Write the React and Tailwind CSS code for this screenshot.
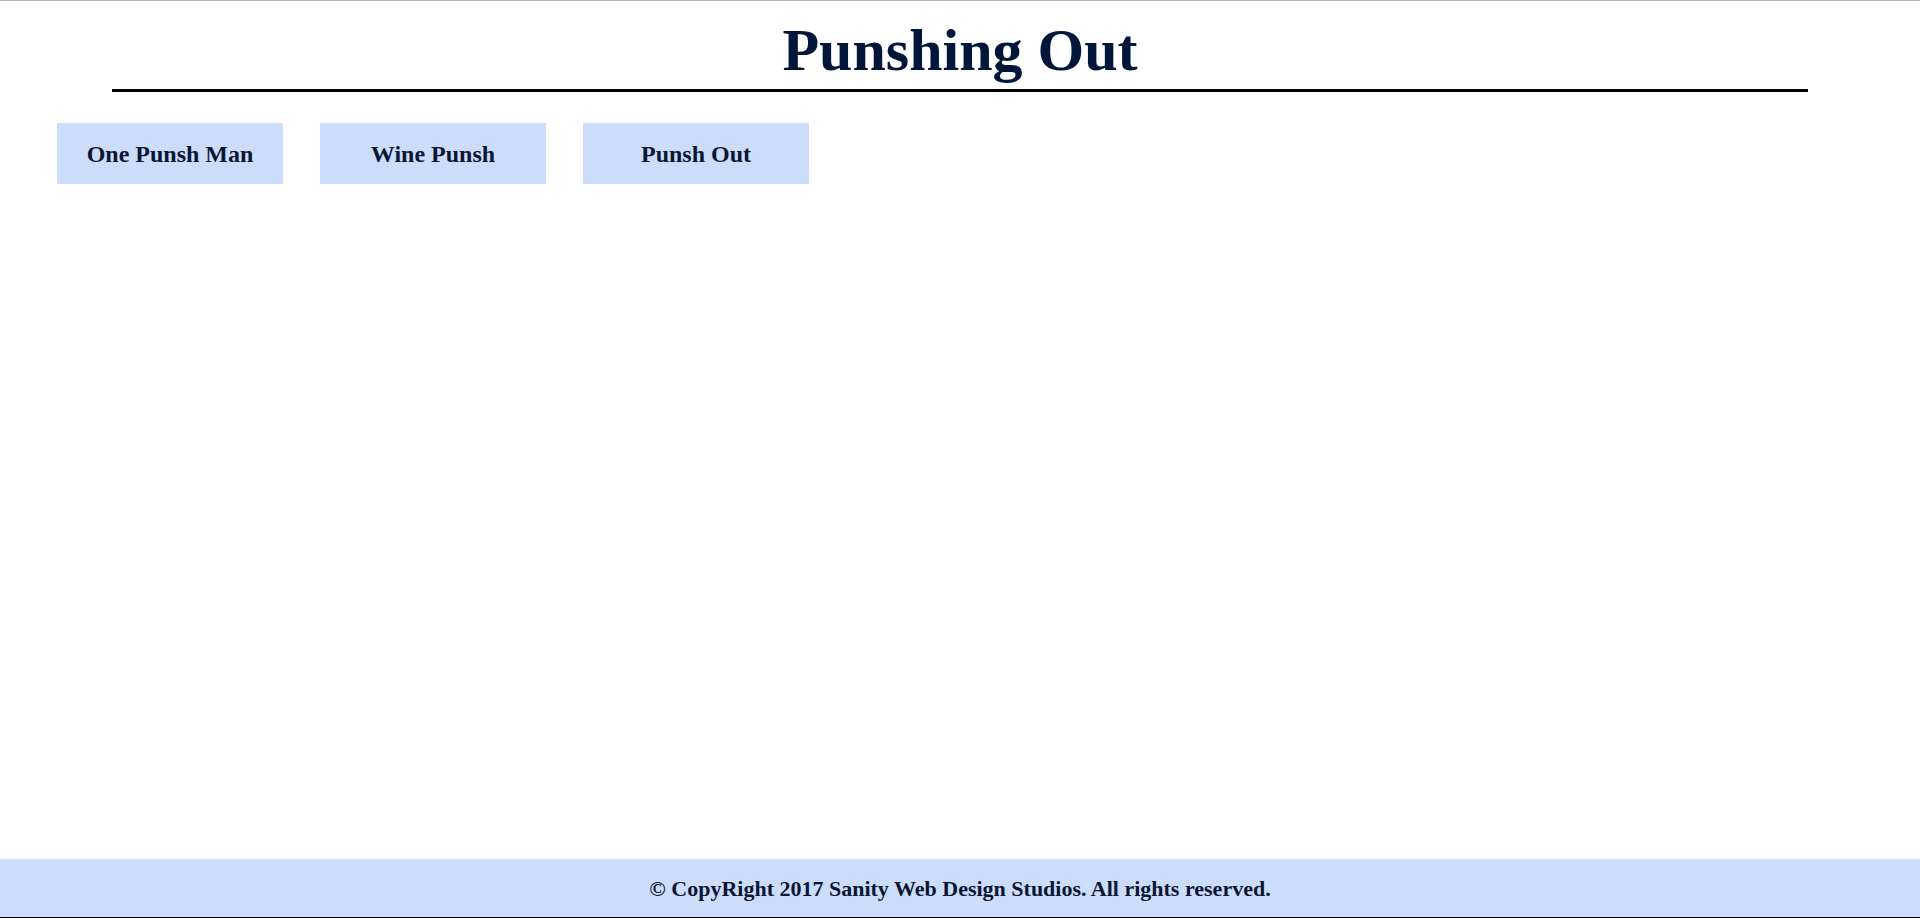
const links = ["One Punsh Man", "Wine Punsh", "Punsh Out"];

function NavButton({ label }) {
  return (
    <a
      href="#"
      className="flex h-[61px] w-[226px] items-center justify-center bg-[#cbddfb] pt-[1px] text-[24px] font-bold text-[#0b1633]"
    >
      {label}
    </a>
  );
}

export default function App() {
  return (
    <div className="flex min-h-screen flex-col border-t border-[#b5b5b5] bg-white font-['Liberation_Serif',_'Times_New_Roman',_serif]">
      <header className="pt-[19px]">
        <h1 className="text-center text-[60px] font-bold leading-none text-[#011638]">
          Punshing Out
        </h1>
        <div className="mx-[112px] mt-[9px] h-[3px] bg-black" />
      </header>

      <main className="flex-1">
        <nav className="flex gap-[37px] pl-[57px] pt-[31px]">
          {links.map((l) => (
            <NavButton key={l} label={l} />
          ))}
        </nav>
      </main>

      <footer className="flex h-[59px] items-center justify-center border-b border-black bg-[#cbddfb] text-[22px] font-bold text-[#0b1633]">
        © CopyRight 2017 Sanity Web Design Studios. All rights reserved.
      </footer>
    </div>
  );
}
